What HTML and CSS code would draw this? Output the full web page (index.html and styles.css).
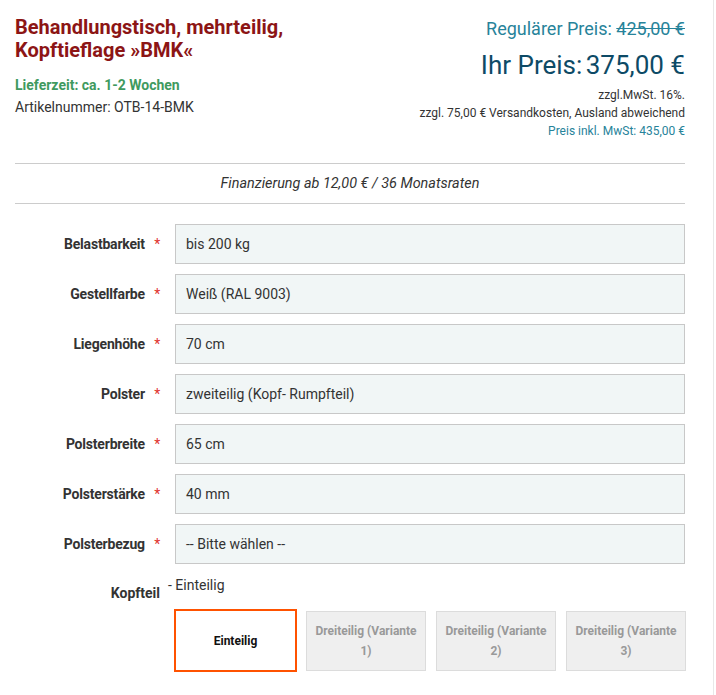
FILE: index.html
```html
<!DOCTYPE html>
<html lang="de">
<head>
    <meta charset="UTF-8">
    <meta name="viewport" content="width=device-width, initial-scale=1.0">
    <title>Behandlungstisch BMK</title>
    <link rel="stylesheet" href="styles.css">
</head>
<body>
    <div class="page">
        <div class="product">
            <!-- Head: title and price -->
            <div class="product-head">
                <div class="product-info">
                    <h1>Behandlungstisch, mehrteilig, Kopftieflage »BMK«</h1>
                    <p class="delivery">Lieferzeit: ca. 1-2 Wochen</p>
                    <p class="sku">Artikelnummer: OTB-14-BMK</p>
                </div>
                <div class="price-box">
                    <div class="old-price">Regulärer Preis: <s>425,00 €</s></div>
                    <div class="new-price"><span>Ihr Preis:</span> 375,00 €</div>
                    <div class="tax-info">
                        <div class="tax">zzgl.MwSt. 16%.</div>
                        <div class="tax">zzgl. 75,00 € Versandkosten, Ausland abweichend</div>
                        <div class="tax gross">Preis inkl. MwSt: 435,00 €</div>
                    </div>
                </div>
            </div>

            <div class="financing"><span>Finanzierung ab 12,00 € / 36 Monatsraten</span></div>

            <!-- Options -->
            <div class="options">
                <div class="option-row">
                    <label>Belastbarkeit <em>*</em></label>
                    <div class="field">bis 200 kg</div>
                </div>
                <div class="option-row">
                    <label>Gestellfarbe <em>*</em></label>
                    <div class="field">Weiß (RAL 9003)</div>
                </div>
                <div class="option-row">
                    <label>Liegenhöhe <em>*</em></label>
                    <div class="field">70 cm</div>
                </div>
                <div class="option-row">
                    <label>Polster <em>*</em></label>
                    <div class="field">zweiteilig (Kopf- Rumpfteil)</div>
                </div>
                <div class="option-row">
                    <label>Polsterbreite <em>*</em></label>
                    <div class="field">65 cm</div>
                </div>
                <div class="option-row">
                    <label>Polsterstärke <em>*</em></label>
                    <div class="field">40 mm</div>
                </div>
                <div class="option-row">
                    <label>Polsterbezug <em>*</em></label>
                    <div class="field">-- Bitte wählen --</div>
                </div>

                <div class="swatch-row">
                    <label>Kopfteil</label>
                    <div class="swatch-body">
                        <div class="swatch-current">- Einteilig</div>
                        <div class="swatches">
                            <button class="swatch selected"><span>Einteilig</span></button>
                            <button class="swatch"><span>Dreiteilig (Variante 1)</span></button>
                            <button class="swatch"><span>Dreiteilig (Variante 2)</span></button>
                            <button class="swatch"><span>Dreiteilig (Variante 3)</span></button>
                        </div>
                    </div>
                </div>
            </div>
        </div>
    </div>
</body>
</html>
```
FILE: styles.css
```css
/* General Styles */
body {
    margin: 0;
    padding: 0;
    font-family: Roboto, "Liberation Sans", sans-serif;
    color: #333;
    background: #fff;
}

.page {
    width: 713px;
    min-height: 695px;
    border-right: 1px solid #e8e8e8;
}

.product {
    width: 670px;
    padding: 14px 15px 0;
}

/* Head */
.product-head {
    display: flex;
    justify-content: space-between;
    padding-bottom: 23px;
    border-bottom: 1px solid #ccc;
}

.product-info h1 {
    margin: 2px 0 0;
    width: 300px;
    font-size: 20px;
    line-height: 23px;
    font-weight: 700;
    color: #8c1515;
}

.delivery {
    margin: 15px 0 0;
    font-size: 14px;
    font-weight: 700;
    color: #3f9a5f;
}

.sku {
    margin: 6px 0 0;
    font-size: 14px;
    color: #333;
}

.price-box {
    text-align: right;
    padding-top: 4px;
}

.old-price {
    font-size: 18px;
    line-height: 22px;
    color: #27839a;
}

.new-price {
    margin-top: 10px;
    font-size: 26px;
    line-height: 30px;
    color: #0d4a66;
}

.new-price span {
    margin-right: -3px;
}

.tax-info {
    margin-top: 6px;
}

.tax {
    font-size: 12px;
    line-height: 18px;
    color: #333;
}

.tax.gross {
    color: #27839a;
}

/* Financing */
.financing {
    padding: 11px 0 10px;
    text-align: center;
    border-bottom: 1px solid #ccc;
    font-size: 14.4px;
    line-height: 18px;
    font-style: italic;
    color: #333;
}

/* Options */
.options {
    padding-top: 20px;
}

.option-row {
    display: flex;
    align-items: center;
    margin-bottom: 10px;
}

.option-row label {
    width: 160px;
    flex-shrink: 0;
    padding-right: 15px;
    box-sizing: border-box;
    text-align: right;
    font-size: 14px;
    font-weight: 700;
    color: #333;
    letter-spacing: -0.2px;
}

.option-row label em {
    font-style: normal;
    font-weight: 400;
    color: #e0322d;
    margin-left: 6px;
}

.field {
    flex: 1;
    height: 38px;
    line-height: 38px;
    padding: 0 10px;
    background: #f1f6f6;
    border: 1px solid #c8c8c8;
    font-size: 14px;
    color: #333;
}

/* Swatches */
.swatch-row {
    display: flex;
    padding-top: 2px;
}

.swatch-row label {
    width: 160px;
    flex-shrink: 0;
    padding-top: 9px;
    padding-right: 15px;
    box-sizing: border-box;
    text-align: right;
    font-size: 14px;
    font-weight: 700;
    color: #333;
}

.swatch-body {
    flex: 1;
}

.swatch-current {
    margin-left: -7px;
    font-size: 14px;
    line-height: 18px;
    color: #333;
}

.swatches {
    display: flex;
    gap: 10px;
    margin-top: 17px;
}

.swatch {
    width: 120px;
    height: 60px;
    padding: 0 8px;
    background: #efefef;
    border: 1px solid #dcdcdc;
    font-family: inherit;
    font-size: 12px;
    line-height: 20px;
    font-weight: 700;
    color: #999;
    cursor: pointer;
}

.swatch.selected {
    margin: -2px -1px -2px -1px;
    width: 123px;
    height: 63px;
    background: #fff;
    border: 2px solid #ff5200;
    color: #111;
}
```
